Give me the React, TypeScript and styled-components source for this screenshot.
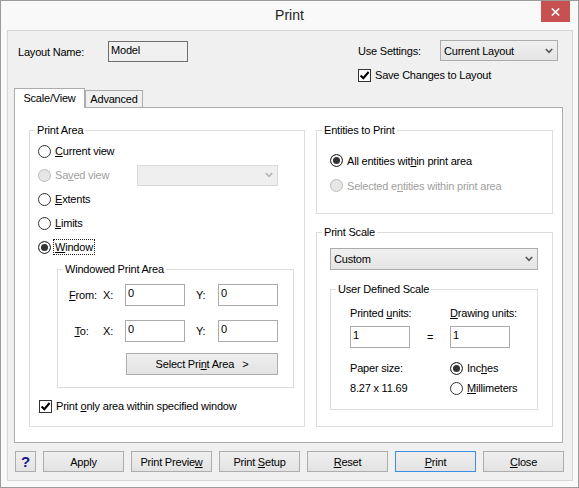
import React from 'react';
import styled, { createGlobalStyle } from 'styled-components';

const GlobalStyle = createGlobalStyle`
  html, body {
    margin: 0;
    padding: 0;
    background: #fff;
  }
  body {
    font-family: "Liberation Sans", Arial, sans-serif;
    font-size: 11px;
    color: #000;
  }
  * {
    box-sizing: border-box;
  }
`;

const Window = styled.div`
  width: 579px;
  height: 488px;
  border: 1px solid #9b9b9b;
  background: #f9f9f9;
  display: flex;
  flex-direction: column;
  letter-spacing: -0.2px;
`;

const TitleBar = styled.div`
  flex: none;
  height: 29px;
  display: grid;
  grid-template-columns: 1fr auto 1fr;
`;

const Title = styled.div`
  grid-column: 2;
  font-size: 14px;
  line-height: 29px;
  letter-spacing: 0;
  color: #222;
`;

const CloseBox = styled.div`
  grid-column: 3;
  justify-self: end;
  width: 29px;
  height: 21px;
  margin-right: 8px;
  background: #c75050;
  display: flex;
  align-items: center;
  justify-content: center;
`;

const Content = styled.div`
  flex: 1;
  margin: 0 5px 6px 6px;
  border: 1px solid #d5d5d5;
  background: #f0f0f0;
  display: flex;
  flex-direction: column;
`;

const Header = styled.div`
  display: flex;
  justify-content: space-between;
  align-items: flex-start;
  padding: 9px 14px 0 10px;
`;

const NameGroup = styled.div`
  display: flex;
  align-items: center;
  margin-top: 1px;
`;

const FieldLabel = styled.span<{ $w: number }>`
  flex: none;
  width: ${p => p.$w}px;
`;

const ReadOnlyBox = styled.div`
  width: 80px;
  height: 21px;
  border: 1px solid #6e6e6e;
  background: #f0f0f0;
  padding: 1px 2px 0;
  line-height: 14px;
`;

const SettingsGroup = styled.div`
  display: flex;
  flex-direction: column;
`;

const SettingsRow = styled.div`
  display: flex;
  align-items: center;
  height: 21px;
`;

const DropDown = styled.div<{ $w?: number; $h?: number; $disabled?: boolean }>`
  width: ${p => (p.$w ? `${p.$w}px` : '100%')};
  height: ${p => p.$h || 21}px;
  border: 1px solid ${p => (p.$disabled ? '#d9d9d9' : '#acacac')};
  background: ${p => (p.$disabled ? '#efefef' : 'linear-gradient(#efefef, #e5e5e5)')};
  display: flex;
  align-items: center;
  justify-content: space-between;
  padding: 0 4px 0 3px;
`;

const CheckItem = styled.label<{ $top?: number; $left?: number }>`
  display: flex;
  align-items: center;
  height: 14px;
  margin-top: ${p => p.$top || 0}px;
  margin-left: ${p => p.$left || 0}px;
`;

const CheckBox = styled.span`
  flex: none;
  width: 13px;
  height: 13px;
  margin-right: 4px;
  border: 1px solid #333;
  background: #fff;
  display: flex;
  align-items: center;
  justify-content: center;
`;

const TabStrip = styled.div`
  display: flex;
  align-items: flex-end;
  margin: 6px 0 -1px 6px;
  position: relative;
  z-index: 1;
`;

const Tab = styled.div<{ $active?: boolean; $w: number }>`
  width: ${p => p.$w}px;
  height: ${p => (p.$active ? 20 : 18)}px;
  border: 1px solid #acacac;
  border-bottom: ${p => (p.$active ? 'none' : '1px solid #acacac')};
  background: ${p => (p.$active ? '#fff' : '#f0f0f0')};
  display: flex;
  align-items: center;
  justify-content: center;
  padding-bottom: ${p => (p.$active ? 1 : 0)}px;
`;

const Panel = styled.div`
  width: 549px;
  height: 336px;
  margin-left: 6px;
  border: 1px solid #acacac;
  background: #fff;
  padding: 15px 9px 15px 14px;
  display: grid;
  grid-template-columns: 276px 237px;
  column-gap: 11px;
`;

const Column = styled.div`
  display: flex;
  flex-direction: column;
  gap: 11px;
`;

const Group = styled.fieldset<{ $h?: number; $w?: number; $top?: number; $left?: number }>`
  margin: ${p => p.$top || 0}px 0 0 ${p => p.$left || 0}px;
  padding: 0;
  min-width: 0;
  border: 1px solid #dcdcdc;
  ${p => (p.$h ? `height: ${p.$h}px; flex: none;` : 'flex: 1;')}
  ${p => (p.$w ? `width: ${p.$w}px;` : '')}
`;

const Legend = styled.legend`
  margin-left: 5px;
  padding: 0 2px;
  line-height: 14px;
`;

const GroupBody = styled.div<{ $pad: string }>`
  padding: ${p => p.$pad};
`;

const RadioItem = styled.label<{ $h: number; $w?: number; $disabled?: boolean }>`
  display: flex;
  align-items: center;
  height: ${p => p.$h}px;
  ${p => (p.$w ? `width: ${p.$w}px; flex: none;` : '')}
  color: ${p => (p.$disabled ? '#a0a0a0' : '#000')};
  white-space: nowrap;
`;

const RadioDot = styled.span<{ $checked?: boolean; $disabled?: boolean }>`
  flex: none;
  width: 13px;
  height: 13px;
  margin-right: 4px;
  border-radius: 50%;
  border: 1px solid ${p => (p.$disabled ? '#bcbcbc' : '#333')};
  background: ${p => (p.$disabled ? '#e6e6e6' : p.$checked ? '#333' : '#fff')};
  box-shadow: ${p => (p.$checked ? 'inset 0 0 0 2px #fff' : 'none')};
`;

const InlineRow = styled.div`
  display: flex;
  align-items: center;
`;

const Key = styled.span`
  text-decoration: underline;
  text-underline-offset: 1px;
`;

const Focused = styled.span`
  outline: 1px dotted #222;
  outline-offset: 1px;
`;

const CoordGrid = styled.div`
  display: grid;
  grid-template-columns: 25px 9px 22px 60px 11px 22px 60px;
  grid-auto-rows: 22px;
  row-gap: 14px;
  align-items: center;
`;

const CoordLabel = styled.span<{ $col: number; $center?: boolean }>`
  grid-column: ${p => p.$col};
  text-align: ${p => (p.$center ? 'center' : 'left')};
  white-space: nowrap;
`;

const TextBox = styled.div<{ $col?: number; $row?: number; $end?: boolean }>`
  ${p => (p.$col ? `grid-column: ${p.$col};` : '')}
  ${p => (p.$row ? `grid-row: ${p.$row};` : '')}
  ${p => (p.$end ? 'align-self: end;' : '')}
  height: 22px;
  border: 1px solid #ababab;
  background: #fff;
  padding: 1px 2px 0;
  line-height: 14px;
`;

const WideButton = styled.div`
  width: 152px;
  height: 22px;
  margin: 11px 0 0 57px;
  border: 1px solid #adadad;
  background: linear-gradient(#efefef, #e3e3e3);
  display: flex;
  align-items: center;
  justify-content: center;
`;

const Arrow = styled.span`
  margin-left: 8px;
`;

const UnitsGrid = styled.div`
  display: grid;
  grid-template-columns: 60px 40px 60px;
  grid-template-rows: 14px 28px 30px 20px;
`;

const UnitCell = styled.div<{ $col: string; $row: number; $align?: string; $center?: boolean }>`
  grid-column: ${p => p.$col};
  grid-row: ${p => p.$row};
  align-self: ${p => p.$align || 'center'};
  line-height: ${p => (p.$align === 'end' ? 22 : 14)}px;
  text-align: ${p => (p.$center ? 'center' : 'left')};
  white-space: nowrap;
`;

const ButtonBar = styled.div`
  display: flex;
  gap: 7px;
  padding: 8px 0 0 7px;
`;

const DlgButton = styled.button<{ $default?: boolean; $w?: number }>`
  width: ${p => p.$w || 81}px;
  height: 21px;
  padding: 0;
  border: 1px solid ${p => (p.$default ? '#3d8fe3' : '#adadad')};
  background: linear-gradient(#efefef, #e3e3e3);
  font: inherit;
  letter-spacing: inherit;
  color: #000;
`;

const HelpMark = styled.span`
  font-size: 15px;
  font-weight: bold;
  color: #16168a;
  line-height: 19px;
`;

const Chevron = ({ color = '#555' }: { color?: string }) => (
  <svg width="8" height="6" viewBox="0 0 8 6">
    <path d="M0.8 1 L4 4.4 L7.2 1" fill="none" stroke={color} strokeWidth="1.6" />
  </svg>
);

const Tick = () => (
  <svg width="11" height="11" viewBox="0 0 11 11">
    <path d="M1.6 5.6 L4.3 8.3 L9.6 2" fill="none" stroke="#000" strokeWidth="2.1" />
  </svg>
);

const Check = ({ children, top, left }: { children: React.ReactNode; top?: number; left?: number }) => (
  <CheckItem $top={top} $left={left}>
    <CheckBox>
      <Tick />
    </CheckBox>
    <span>{children}</span>
  </CheckItem>
);

const Radio = (props: {
  h: number;
  w?: number;
  checked?: boolean;
  disabled?: boolean;
  children: React.ReactNode;
}) => (
  <RadioItem $h={props.h} $w={props.w} $disabled={props.disabled}>
    <RadioDot $checked={props.checked} $disabled={props.disabled} />
    <span>{props.children}</span>
  </RadioItem>
);

const App = () => {
  return (
    <>
      <GlobalStyle />
      <Window>
        <TitleBar>
          <Title>Print</Title>
          <CloseBox>
            <svg width="9" height="8" viewBox="0 0 9 8">
              <path d="M0.8 0.5 L8.2 7.5 M8.2 0.5 L0.8 7.5" stroke="#fff" strokeWidth="1.6" />
            </svg>
          </CloseBox>
        </TitleBar>
        <Content>
          <Header>
            <NameGroup>
              <FieldLabel $w={90}>Layout Name:</FieldLabel>
              <ReadOnlyBox>Model</ReadOnlyBox>
            </NameGroup>
            <SettingsGroup>
              <SettingsRow>
                <FieldLabel $w={82}>Use Settings:</FieldLabel>
                <DropDown $w={118}>
                  <span>Current Layout</span>
                  <Chevron />
                </DropDown>
              </SettingsRow>
              <Check top={7}>Save Changes to Layout</Check>
            </SettingsGroup>
          </Header>

          <TabStrip>
            <Tab $active $w={71}>Scale/View</Tab>
            <Tab $w={58}>Advanced</Tab>
          </TabStrip>

          <Panel>
            <Group>
              <Legend>Print Area</Legend>
              <GroupBody $pad="2px 0 0 8px">
                <Radio h={24}>
                  <Key>C</Key>urrent view
                </Radio>
                <InlineRow>
                  <Radio h={24} w={99} disabled>
                    Sa<Key>v</Key>ed view
                  </Radio>
                  <DropDown $w={141} $disabled>
                    <span />
                    <Chevron color="#b4b4b4" />
                  </DropDown>
                </InlineRow>
                <Radio h={24}>
                  <Key>E</Key>xtents
                </Radio>
                <Radio h={24}>
                  <Key>L</Key>imits
                </Radio>
                <Radio h={24} checked>
                  <Focused>
                    <Key>W</Key>indow
                  </Focused>
                </Radio>

                <Group $h={126} $w={237} $top={3} $left={19}>
                  <Legend>Windowed Print Area</Legend>
                  <GroupBody $pad="8px 0 0 11px">
                    <CoordGrid>
                      <CoordLabel $col={1} $center>
                        <Key>F</Key>rom:
                      </CoordLabel>
                      <CoordLabel $col={3}>X:</CoordLabel>
                      <TextBox $col={4}>0</TextBox>
                      <CoordLabel $col={6}>Y:</CoordLabel>
                      <TextBox $col={7}>0</TextBox>
                      <CoordLabel $col={1} $center>
                        <Key>T</Key>o:
                      </CoordLabel>
                      <CoordLabel $col={3}>X:</CoordLabel>
                      <TextBox $col={4}>0</TextBox>
                      <CoordLabel $col={6}>Y:</CoordLabel>
                      <TextBox $col={7}>0</TextBox>
                    </CoordGrid>
                    <WideButton>
                      <span>
                        Select Pri<Key>n</Key>t Area
                      </span>
                      <Arrow>&gt;</Arrow>
                    </WideButton>
                  </GroupBody>
                </Group>

                <Check top={11} left={1}>
                  Print <Key>o</Key>nly area within specified window
                </Check>
              </GroupBody>
            </Group>

            <Column>
              <Group $h={91}>
                <Legend>Entities to Print</Legend>
                <GroupBody $pad="11px 0 0 13px">
                  <Radio h={25} checked>
                    All entities wit<Key>h</Key>in print area
                  </Radio>
                  <Radio h={25} disabled>
                    Selected e<Key>n</Key>tities within print area
                  </Radio>
                </GroupBody>
              </Group>

              <Group>
                <Legend>Print Scale</Legend>
                <GroupBody $pad="9px 14px 0 13px">
                  <DropDown $h={22}>
                    <span>Custom</span>
                    <Chevron />
                  </DropDown>
                  <Group $h={128} $top={12}>
                    <Legend>User Defined Scale</Legend>
                    <GroupBody $pad="10px 0 0 19px">
                      <UnitsGrid>
                        <UnitCell $col="1" $row={1}>
                          Printed <Key>u</Key>nits:
                        </UnitCell>
                        <UnitCell $col="3" $row={1}>
                          <Key>D</Key>rawing units:
                        </UnitCell>
                        <TextBox $col={1} $row={2} $end>
                          1
                        </TextBox>
                        <UnitCell $col="2" $row={2} $align="end" $center>
                          =
                        </UnitCell>
                        <TextBox $col={3} $row={2} $end>
                          1
                        </TextBox>
                        <UnitCell $col="1 / span 2" $row={3} $align="end">
                          <RadioItem $h={20}>Paper size:</RadioItem>
                        </UnitCell>
                        <UnitCell $col="3" $row={3} $align="end">
                          <Radio h={20} checked>
                            Inc<Key>h</Key>es
                          </Radio>
                        </UnitCell>
                        <UnitCell $col="1 / span 2" $row={4}>
                          8.27 x 11.69
                        </UnitCell>
                        <UnitCell $col="3" $row={4}>
                          <Radio h={20}>
                            <Key>M</Key>illimeters
                          </Radio>
                        </UnitCell>
                      </UnitsGrid>
                    </GroupBody>
                  </Group>
                </GroupBody>
              </Group>
            </Column>
          </Panel>

          <ButtonBar>
            <DlgButton $w={21}>
              <HelpMark>?</HelpMark>
            </DlgButton>
            <DlgButton>Apply</DlgButton>
            <DlgButton>
              Print Previe<Key>w</Key>
            </DlgButton>
            <DlgButton>
              Print <Key>S</Key>etup
            </DlgButton>
            <DlgButton>
              <Key>R</Key>eset
            </DlgButton>
            <DlgButton $default>
              <Key>P</Key>rint
            </DlgButton>
            <DlgButton>
              <Key>C</Key>lose
            </DlgButton>
          </ButtonBar>
        </Content>
      </Window>
    </>
  );
};

export default App;
